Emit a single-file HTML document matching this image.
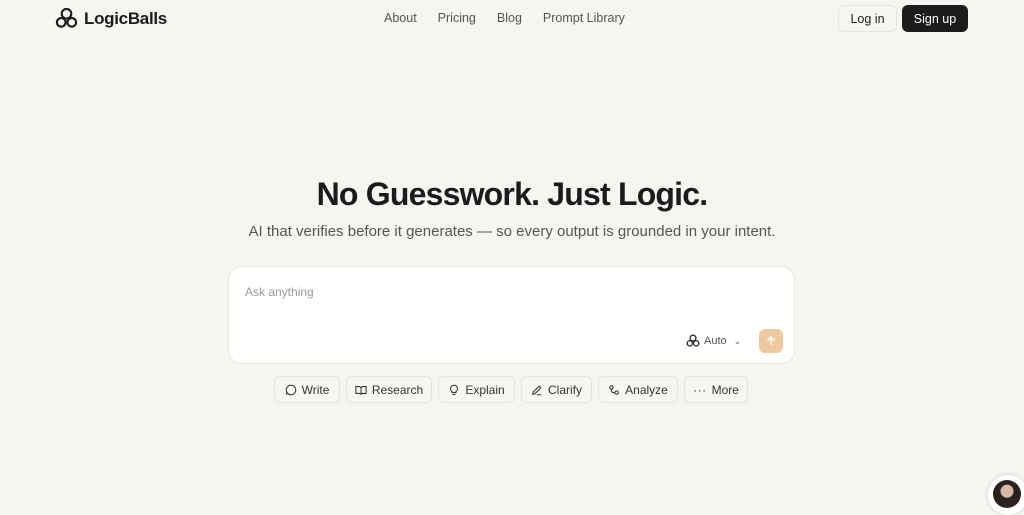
<!DOCTYPE html>
<html><head><meta charset="utf-8"><style>
*{box-sizing:border-box;margin:0;padding:0}
body{width:1024px;height:511px;background:#f6f5f1;font-family:"Liberation Sans",sans-serif;color:#1c1c1c;position:relative;overflow:hidden}
.logo{position:absolute;left:55px;top:7px;display:flex;align-items:center;gap:6px;font-weight:bold;font-size:17px;letter-spacing:-0.3px}
.nav{position:absolute;top:11px;left:384px;display:flex;gap:0;font-size:12.5px;color:#555}
.nav span{margin-right:21px}
.login{position:absolute;left:838px;top:5px;width:59px;height:27px;border:1px solid #e6e4df;border-radius:6px;font-size:12.5px;display:flex;align-items:center;justify-content:center;background:#f7f6f2}
.signup{position:absolute;left:902px;top:5px;width:66px;height:27px;border-radius:6px;background:#1c1c1c;color:#fff;font-size:12.5px;display:flex;align-items:center;justify-content:center}
h1{position:absolute;top:176px;width:100%;text-align:center;font-size:32px;font-weight:bold;letter-spacing:-0.8px}
.sub{position:absolute;top:223px;width:100%;text-align:center;font-size:15px;color:#555}
.box{position:absolute;left:228px;top:266px;width:567px;height:98px;background:#fff;border:1px solid #e8e6e1;border-radius:14px}
.ph{position:absolute;left:16px;top:18px;font-size:12px;color:#999}
.auto{position:absolute;left:457px;top:67px;font-size:11px;color:#555;display:flex;align-items:center;gap:4px}
.send{position:absolute;left:530px;top:62px;width:24px;height:24px;border-radius:6px;background:#efc9a0;display:flex;align-items:center;justify-content:center}
.chips{position:absolute;top:376px;left:274px;display:flex;gap:6px}
.chip{height:27px;border:1px solid #e6e4df;border-radius:6px;display:flex;align-items:center;justify-content:center;gap:5px;font-size:12px;color:#333;background:#f7f6f2;white-space:nowrap}
.av{position:absolute;left:988px;top:475px;width:40px;height:40px;border-radius:50%;background:#fff;box-shadow:0 0 6px rgba(0,0,0,.15)}
.av div{position:absolute;left:5px;top:5px;width:28px;height:28px;border-radius:50%;background:radial-gradient(circle at 50% 40%,#d9b8a4 0 6px,#2a2220 7px 100%)}
</style></head><body>
<div class="logo"><svg width="23" height="23" viewBox="0 0 24 24" fill="none" stroke="#1c1c1c" stroke-width="2.2"><circle cx="12" cy="7" r="5"/><circle cx="6.5" cy="16" r="4.5"/><circle cx="17.5" cy="16" r="4.5"/></svg>LogicBalls</div>
<div class="nav"><span>About</span><span>Pricing</span><span>Blog</span><span>Prompt Library</span></div>
<div class="login">Log in</div><div class="signup">Sign up</div>
<h1>No Guesswork. Just Logic.</h1>
<div class="sub">AI that verifies before it generates — so every output is grounded in your intent.</div>
<div class="box"><div class="ph">Ask anything</div>
<div class="auto"><svg width="14" height="14" viewBox="0 0 24 24" fill="none" stroke="#333" stroke-width="2.4"><circle cx="12" cy="7" r="5"/><circle cx="6.5" cy="16" r="4.5"/><circle cx="17.5" cy="16" r="4.5"/></svg>Auto <span style="font-size:9px;margin-left:3px">⌄</span></div>
<div class="send"><svg width="12" height="12" viewBox="0 0 12 12" stroke="#fff" stroke-width="1.3" fill="none"><path d="M6 10V2M2.5 5.5L6 2l3.5 3.5"/></svg></div></div>
<div class="chips">
<div class="chip" style="width:66px"><svg width="12" height="12" viewBox="0 0 14 14" fill="none" stroke="#333" stroke-width="1.2"><path d="M7 1.5a5.5 5.5 0 1 1-4.6 8.5L1.5 12.5l.8-2.7A5.5 5.5 0 0 1 7 1.5z"/></svg>Write</div>
<div class="chip" style="width:86px"><svg width="12" height="12" viewBox="0 0 14 14" fill="none" stroke="#333" stroke-width="1.2"><path d="M1 3h4.5L7 4.5 8.5 3H13v8H8.5L7 12 5.5 11H1zM7 4.5V12"/></svg>Research</div>
<div class="chip" style="width:77px"><svg width="12" height="12" viewBox="0 0 14 14" fill="none" stroke="#333" stroke-width="1.2"><path d="M7 1.5a4 4 0 0 1 2.3 7.3V10H4.7V8.8A4 4 0 0 1 7 1.5zM5.3 12.3h3.4"/></svg>Explain</div>
<div class="chip" style="width:71px"><svg width="12" height="12" viewBox="0 0 14 14" fill="none" stroke="#333" stroke-width="1.2"><path d="M2 12l.6-2.6L9.5 2.5l2 2-6.9 6.9zM7 12.5h5"/></svg>Clarify</div>
<div class="chip" style="width:80px"><svg width="12" height="12" viewBox="0 0 14 14" fill="none" stroke="#333" stroke-width="1.2"><circle cx="4" cy="4" r="2"/><circle cx="10" cy="10" r="2"/><path d="M4 6v2a2 2 0 0 0 2 2h2"/></svg>Analyze</div>
<div class="chip" style="width:64px"><span style="letter-spacing:0.5px">···</span>More</div>
</div>
<div class="av"><div></div></div>
</body></html>
